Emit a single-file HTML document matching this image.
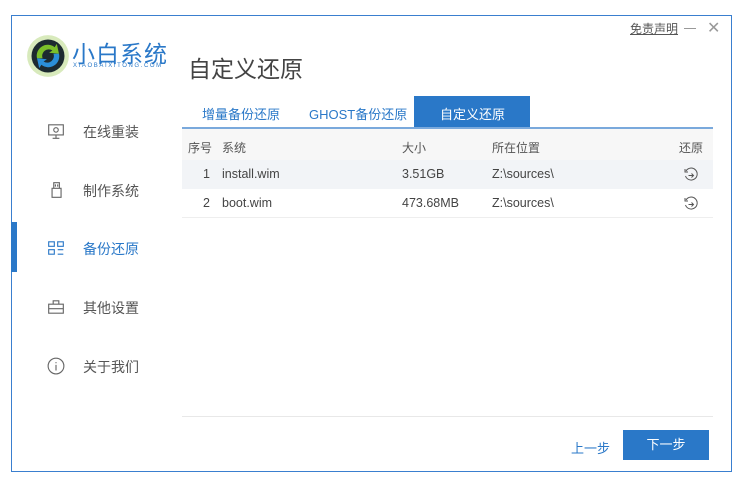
<!DOCTYPE html>
<html><head><meta charset="utf-8"><style>
*{margin:0;padding:0;box-sizing:border-box}
body{width:748px;height:492px;background:#fff;font-family:"Liberation Sans","Noto Sans CJK SC",sans-serif;position:relative;overflow:hidden;color:#333}
.win{position:absolute;left:11px;top:15px;width:721px;height:457px;border:1px solid #3a7fcf;background:#fff}
.a{position:absolute;white-space:nowrap}
.nav{font-size:14px;color:#555;left:83px}
.ic{position:absolute;left:47px}
.tab{font-size:13px;color:#2a78c8;top:104px}
.th{font-size:12px;color:#555;top:139px}
.td{font-size:12.5px;color:#444}
</style></head><body>
<div class="win"></div>
<!-- logo -->
<svg class="a" style="left:26px;top:34px" width="44" height="44" viewBox="0 0 40 40">
<circle cx="20" cy="20" r="19" fill="#8fc43f" opacity=".35"/>
<circle cx="20" cy="20" r="15" fill="#1d2a30"/>
<path d="M10 22a10 10 0 0 1 16-10l2-3 2 9-9-1 3-2a6 6 0 0 0-9 7z" fill="#7bbf2a"/>
<path d="M30 18a10 10 0 0 1-16 10l-2 3-2-9 9 1-3 2a6 6 0 0 0 9-7z" fill="#2b8ed8"/>
</svg>
<div class="a" style="left:72px;top:35px;font-size:23px;color:#2a78c8;letter-spacing:1px">小白系统</div>
<div class="a" style="left:73px;top:63px;font-size:6px;color:#2a78c8;letter-spacing:1.6px">XIAOBAIXITONG.COM</div>
<div class="a" style="left:188px;top:50px;font-size:23px;color:#444">自定义还原</div>
<div class="a" style="left:630px;top:20px;font-size:12px;color:#555;text-decoration:underline">免责声明</div>
<div class="a" style="left:684px;top:28px;width:12px;height:1px;background:#999"></div>
<div class="a" style="left:707px;top:18px;font-size:16px;color:#999">✕</div>

<!-- sidebar -->
<div class="a" style="left:11px;top:222px;width:6px;height:50px;background:#2a78c8"></div>
<svg class="ic" style="top:122px" width="18" height="18" viewBox="0 0 16 16" fill="none" stroke="#666"><rect x="1.5" y="2.5" width="13" height="9"/><path d="M5 14.5h6M8 11.5v3"/><circle cx="8" cy="7" r="2"/></svg>
<div class="a nav" style="top:122px">在线重装</div>
<svg class="ic" style="top:181px" width="18" height="18" viewBox="0 0 16 16" fill="none" stroke="#666"><rect x="4.5" y="6.5" width="8" height="8"/><path d="M6 6.5V1.5h5v5M7.5 3v2M9.5 3v2"/></svg>
<div class="a nav" style="top:181px">制作系统</div>
<svg class="ic" style="top:239px" width="18" height="18" viewBox="0 0 16 16" fill="none" stroke="#2a78c8"><rect x="1.5" y="2.5" width="5" height="4"/><rect x="9.5" y="2.5" width="5" height="4"/><rect x="1.5" y="9.5" width="5" height="4"/><path d="M9.5 9.5h5M9.5 13.5h5"/></svg>
<div class="a nav" style="top:239px;color:#2a78c8">备份还原</div>
<svg class="ic" style="top:298px" width="18" height="18" viewBox="0 0 16 16" fill="none" stroke="#666"><rect x="1.5" y="5.5" width="13" height="8"/><path d="M5.5 5.5v-3h5v3M1.5 9.5h13"/></svg>
<div class="a nav" style="top:298px">其他设置</div>
<svg class="ic" style="top:357px" width="18" height="18" viewBox="0 0 16 16" fill="none" stroke="#666"><circle cx="8" cy="8" r="7"/><path d="M8 7v5M8 4.5v1"/></svg>
<div class="a nav" style="top:357px">关于我们</div>

<!-- tabs -->
<div class="a tab" style="left:202px">增量备份还原</div>
<div class="a tab" style="left:309px">GHOST备份还原</div>
<div class="a" style="left:414px;top:96px;width:116px;height:31px;background:#2a78c8"></div>
<div class="a tab" style="left:440px;color:#fff">自定义还原</div>
<div class="a" style="left:182px;top:127px;width:531px;height:2px;background:#7aa9dc"></div>
<!-- table -->
<div class="a" style="left:182px;top:129px;width:531px;height:31px;background:#f7f7f7"></div>
<div class="a th" style="left:188px">序号</div>
<div class="a th" style="left:222px">系统</div>
<div class="a th" style="left:402px">大小</div>
<div class="a th" style="left:492px">所在位置</div>
<div class="a th" style="left:679px">还原</div>
<div class="a" style="left:182px;top:160px;width:531px;height:29px;background:#f2f4f7"></div>
<div class="a td" style="left:203px;top:167px">1</div>
<div class="a td" style="left:222px;top:167px">install.wim</div>
<div class="a td" style="left:402px;top:167px">3.51GB</div>
<div class="a td" style="left:492px;top:167px">Z:\sources\</div>
<div class="a" style="left:182px;top:217px;width:531px;height:1px;background:#eee"></div>
<div class="a td" style="left:203px;top:196px">2</div>
<div class="a td" style="left:222px;top:196px">boot.wim</div>
<div class="a td" style="left:402px;top:196px">473.68MB</div>
<div class="a td" style="left:492px;top:196px">Z:\sources\</div>
<svg class="a" style="left:683px;top:167px" width="16" height="16" viewBox="0 0 16 16" fill="none" stroke="#555"><path d="M3 4A6 6 0 1 1 2.5 9"/><path d="M2 2v3h3"/><path d="M5.5 8.5h5M8.5 6.5l2 2-2 2"/></svg>
<svg class="a" style="left:683px;top:196px" width="16" height="16" viewBox="0 0 16 16" fill="none" stroke="#555"><path d="M3 4A6 6 0 1 1 2.5 9"/><path d="M2 2v3h3"/><path d="M5.5 8.5h5M8.5 6.5l2 2-2 2"/></svg>
<div class="a" style="left:182px;top:416px;width:531px;height:1px;background:#e8e8e8"></div>
<div class="a" style="left:571px;top:438px;font-size:13px;color:#2a78c8">上一步</div>
<div class="a" style="left:623px;top:430px;width:86px;height:30px;background:#2a78c8;color:#fff;font-size:13px;text-align:center;line-height:30px">下一步</div>
</body></html>
